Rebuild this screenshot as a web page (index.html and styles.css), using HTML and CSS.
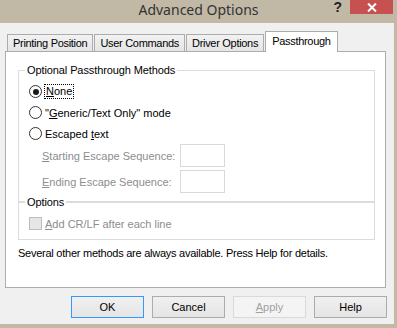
FILE: index.html
```html
<!DOCTYPE html>
<html lang="en">
<head>
    <meta charset="UTF-8">
    <title>Advanced Options</title>
    <link rel="stylesheet" href="styles.css">
</head>
<body>
    <div class="window">
        <div class="titlebar">
            <span></span>
            <span class="title">Advanced Options</span>
            <div class="caption">
                <span class="help-btn">?</span>
                <span class="close-btn">
                    <svg width="10" height="9" viewBox="0 0 10 9"><path d="M1 0.5 L9 8.5 M9 0.5 L1 8.5" stroke="#fff" stroke-width="2"/></svg>
                </span>
            </div>
        </div>

        <div class="client">
            <div class="tabs">
                <div class="tab">Printing Position</div>
                <div class="tab">User Commands</div>
                <div class="tab">Driver Options</div>
                <div class="tab active">Passthrough</div>
            </div>

            <div class="panel">
                <div class="group methods">
                    <div class="group-title">Optional Passthrough Methods</div>
                    <div class="radio-row first">
                        <span class="radio checked"></span>
                        <span class="focus"><u>N</u>one</span>
                    </div>
                    <div class="radio-row">
                        <span class="radio"></span>
                        <span>"<u>G</u>eneric/Text Only" mode</span>
                    </div>
                    <div class="radio-row">
                        <span class="radio"></span>
                        <span>Escaped <u>t</u>ext</span>
                    </div>
                    <div class="seq-row">
                        <span class="seq-label"><u>S</u>tarting Escape Sequence:</span>
                        <span class="seq-box"></span>
                    </div>
                    <div class="seq-row">
                        <span class="seq-label"><u>E</u>nding Escape Sequence:</span>
                        <span class="seq-box"></span>
                    </div>
                </div>

                <div class="group options">
                    <div class="group-title">Options</div>
                    <div class="check-row">
                        <span class="checkbox"></span>
                        <span><u>A</u>dd CR/LF after each line</span>
                    </div>
                </div>

                <p class="note">Several other methods are always available. Press Help for details.</p>
            </div>

            <div class="buttons">
                <button class="default">OK</button>
                <button>Cancel</button>
                <button disabled><u>A</u>pply</button>
                <button>Help</button>
            </div>
        </div>
    </div>
</body>
</html>
```

FILE: styles.css
```css
body {
    margin: 0;
    background: #c1b9a5;
    font-family: "Liberation Sans", Arial, sans-serif;
    font-size: 11px;
    color: #000;
}
.window {
    width: 397px;
    height: 328px;
    display: flex;
    flex-direction: column;
}

/* title bar */
.titlebar {
    height: 23px;
    display: grid;
    grid-template-columns: 1fr auto 1fr;
    align-items: start;
}
.title {
    font-family: "Noto Sans", sans-serif;
    font-size: 14px;
    line-height: 18px;
    color: #333;
    margin-top: 1px;
}
.caption {
    justify-self: end;
    display: flex;
    align-items: flex-start;
    margin-right: 4px;
}
.help-btn {
    font-family: "Liberation Sans", sans-serif;
    font-weight: bold;
    font-size: 14px;
    line-height: 14px;
    color: #222;
    margin-right: 8px;
}
.close-btn {
    width: 43px;
    height: 14px;
    background: #c75050;
    display: flex;
    align-items: center;
    justify-content: center;
}

/* dialog client area */
.client {
    flex: 1;
    background: #f0f0f0;
    margin: 0 3px 4px 0;
    padding: 8px 8px 0 5px;
    display: flex;
    flex-direction: column;
}
.tabs {
    display: flex;
    align-items: flex-end;
    height: 20px;
    padding-left: 2px;
}
.tab {
    height: 17px;
    box-sizing: border-box;
    border: 1px solid #acacac;
    border-bottom: none;
    background: linear-gradient(#f2f2f2, #e5e5e5);
    padding: 1px 5px 0 5px;
    margin-right: 1px;
    line-height: 14px;
    letter-spacing: -0.3px;
    white-space: nowrap;
}
.tab.active {
    height: 21px;
    margin-bottom: -1px;
    margin-right: 0;
    background: #fff;
    position: relative;
    z-index: 1;
    padding: 2px 6px 0 6px;
}
.panel {
    height: 237px;
    box-sizing: border-box;
    border: 1px solid #acacac;
    background: #fff;
}

/* group boxes */
.group {
    margin: 0 10px 0 12px;
    border: 1px solid #dcdcdc;
}
.group.methods {
    margin-top: 18px;
    padding-bottom: 8px;
}
.group.options {
    padding-bottom: 5px;
}
.group-title {
    width: max-content;
    height: 14px;
    line-height: 14px;
    margin: -8px 0 0 6px;
    padding: 0 2px;
    background: #fff;
    letter-spacing: -0.1px;
}
.radio-row, .check-row {
    height: 21px;
    display: flex;
    align-items: center;
    padding-left: 10px;
}
.radio-row.first {
    margin-top: 4px;
}
.check-row {
    margin-top: 4px;
}
.radio {
    width: 13px;
    height: 13px;
    box-sizing: border-box;
    border: 1px solid #333;
    border-radius: 50%;
    background: #fff;
    margin-right: 3px;
    display: flex;
    align-items: center;
    justify-content: center;
}
.radio.checked::after {
    content: "";
    width: 6px;
    height: 6px;
    border-radius: 50%;
    background: #1a1a1a;
}
.focus {
    outline: 1px dotted #000;
    padding: 0 1px;
    line-height: 13px;
}
.checkbox {
    width: 13px;
    height: 13px;
    box-sizing: border-box;
    border: 1px solid #bcbcbc;
    background: #e6e6e6;
    margin-right: 3px;
}
.check-row span:last-child {
    color: #8d8d8d;
}
.seq-row {
    display: flex;
    align-items: center;
    padding-left: 23px;
}
.seq-row + .seq-row {
    margin-top: 3px;
}
.seq-label {
    width: 138px;
    color: #8d8d8d;
}
.seq-box {
    width: 45px;
    height: 23px;
    box-sizing: border-box;
    border: 1px solid #d9d9d9;
    background: #fff;
}
.note {
    margin: 6px 0 0 12px;
    line-height: 14px;
    letter-spacing: -0.25px;
}

/* buttons */
.buttons {
    display: flex;
    justify-content: flex-end;
    gap: 8px;
    margin: 8px -1px 0 0;
}
button {
    width: 73px;
    height: 22px;
    border: 1px solid #acacac;
    background: linear-gradient(#f0f0f0, #e5e5e5);
    font-family: "Liberation Sans", Arial, sans-serif;
    font-size: 11px;
    color: #000;
    padding: 0;
}
button.default {
    border-color: #3399ff;
}
button:disabled {
    border-color: #d9d9d9;
    background: #f4f4f4;
    color: #a0a0a0;
}
```
